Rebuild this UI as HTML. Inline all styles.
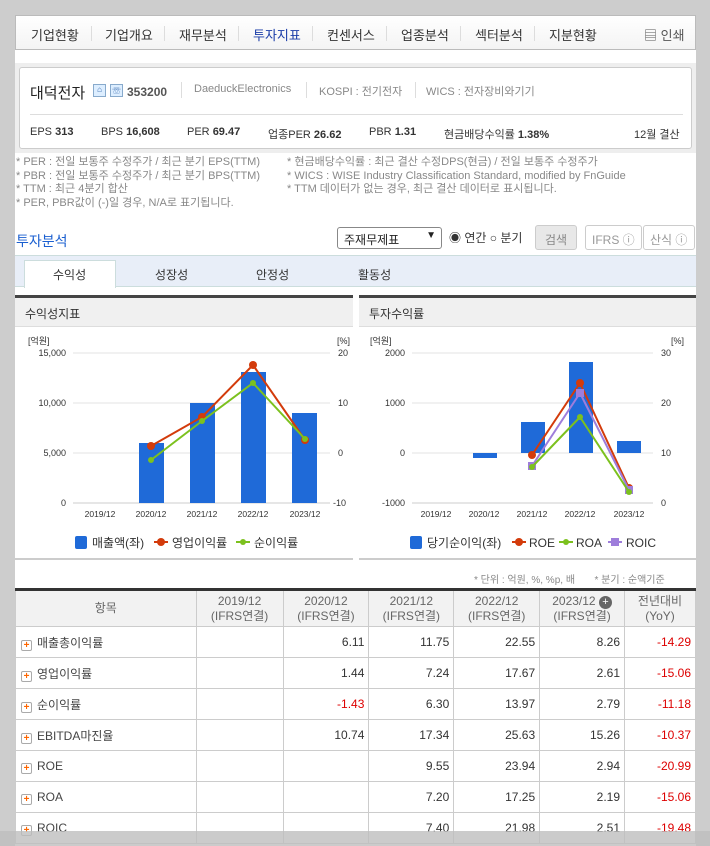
<!DOCTYPE html>
<html><head><meta charset="utf-8"><style>
*{margin:0;padding:0;box-sizing:border-box}
body{width:710px;height:846px;background:#cdcdcd;font-family:"Liberation Sans","Noto Sans CJK KR",sans-serif;font-size:12px;color:#333;position:relative;overflow:hidden}
.wrap{position:absolute;left:15px;top:15px;width:681px;height:831px;background:#fff}
.abs{position:absolute}
.nav{position:absolute;left:15px;top:15px;width:681px;height:35px;border:1px solid #bbb;background:linear-gradient(#fff,#f4f4f4)}
.nav span{position:absolute;top:9px;font-size:13px;color:#333}
.nav i{position:absolute;top:10px;width:1px;height:15px;background:#ddd}
.cbox{position:absolute;left:15px;top:63px;width:681px;height:90px;background:#eee}
.cin{position:absolute;left:4px;top:4px;width:673px;height:82px;background:#fff;border:1px solid #ccc;border-radius:3px}
.note{position:absolute;font-size:11px;color:#888;line-height:13.5px}
.tabs{position:absolute;left:15px;top:255px;width:681px;height:32px;background:#e8eef8;border-top:1px solid #cdd;border-bottom:1px solid #cdd}
.tab{position:absolute;top:10px;font-size:12px;color:#333}
.ph{position:absolute;top:295px;height:32px;background:#f0f0f0;border-top:3px solid #444;border-bottom:1px solid #ddd;font-size:12px;padding:7px 10px}
table{position:absolute;left:15px;top:588px;border-collapse:collapse;width:681px}
td,th{border:1px solid #ccc;height:31px;font-size:12px;font-weight:normal;text-align:right;padding-right:4px;color:#333}
th{background:#f2f2f2;text-align:center;padding:0;color:#666;line-height:15px;height:37px}
thead tr{border-top:3px solid #333}
td.n{text-align:left;padding-left:5px;color:#444}
td.r{color:#d00}
.pl{display:inline-block;width:11px;height:11px;border:1px solid #aaa;border-radius:2px;background:#fff;color:#f60;font-size:10px;line-height:9px;text-align:center;font-weight:bold;margin-right:5px;vertical-align:-1px}
.btn{position:absolute;top:225px;height:25px;border:1px solid #ccc;border-radius:3px;font-size:12px;color:#999;padding:5px 6px}
</style></head><body>
<div class="wrap"></div>
<div class="nav">
<span style="left:15px">기업현황</span><i style="left:75px"></i>
<span style="left:89px">기업개요</span><i style="left:148px"></i>
<span style="left:163px">재무분석</span><i style="left:222px"></i>
<span style="left:237px;color:#1a3ca8">투자지표</span><i style="left:296px"></i>
<span style="left:311px">컨센서스</span><i style="left:370px"></i>
<span style="left:385px">업종분석</span><i style="left:444px"></i>
<span style="left:459px">섹터분석</span><i style="left:518px"></i>
<span style="left:533px">지분현황</span>
<span style="left:628px;color:#555">▤ 인쇄</span>
</div>
<div class="cbox"><div class="cin">
<div class="abs" style="left:10px;top:14px;font-size:15px;color:#222">대덕전자</div>
<div class="abs" style="left:73px;top:16px;width:13px;height:13px;border:1px solid #8ac;background:#def;font-size:8px;color:#36a;text-align:center">⌂</div>
<div class="abs" style="left:90px;top:16px;width:13px;height:13px;border:1px solid #8ac;background:#def;font-size:8px;color:#36a;text-align:center">☏</div>
<div class="abs" style="left:107px;top:17px;font-size:12px;font-weight:bold;color:#555">353200</div>
<div class="abs" style="left:161px;top:14px;width:1px;height:16px;background:#ddd"></div>
<div class="abs" style="left:174px;top:15px;font-size:11px;color:#888">DaeduckElectronics</div>
<div class="abs" style="left:286px;top:14px;width:1px;height:16px;background:#ddd"></div>
<div class="abs" style="left:299px;top:15px;font-size:11px;color:#888">KOSPI : 전기전자</div>
<div class="abs" style="left:395px;top:14px;width:1px;height:16px;background:#ddd"></div>
<div class="abs" style="left:406px;top:15px;font-size:11px;color:#888">WICS : 전자장비와기기</div>
<div class="abs" style="left:10px;top:46px;width:653px;height:1px;background:#ddd"></div>
<div class="abs" style="left:10px;top:58px;font-size:11px;color:#333;white-space:nowrap">EPS <b>313</b></div>
<div class="abs" style="left:81px;top:58px;font-size:11px;white-space:nowrap">BPS <b>16,608</b></div>
<div class="abs" style="left:167px;top:58px;font-size:11px;white-space:nowrap">PER <b>69.47</b></div>
<div class="abs" style="left:248px;top:58px;font-size:11px;white-space:nowrap">업종PER <b>26.62</b></div>
<div class="abs" style="left:349px;top:58px;font-size:11px;white-space:nowrap">PBR <b>1.31</b></div>
<div class="abs" style="left:424px;top:58px;font-size:11px;white-space:nowrap">현금배당수익률 <b>1.38%</b></div>
<div class="abs" style="left:614px;top:58px;font-size:11px;white-space:nowrap">12월 결산</div>
</div></div>
<div class="note" style="left:16px;top:156px">* PER : 전일 보통주 수정주가 / 최근 분기 EPS(TTM)<br>* PBR : 전일 보통주 수정주가 / 최근 분기 BPS(TTM)<br>* TTM : 최근 4분기 합산<br>* PER, PBR값이 (-)일 경우, N/A로 표기됩니다.</div>
<div class="note" style="left:287px;top:156px">* 현금배당수익률 : 최근 결산 수정DPS(현금) / 전일 보통주 수정주가<br>* WICS : WISE Industry Classification Standard, modified by FnGuide<br>* TTM 데이터가 없는 경우, 최근 결산 데이터로 표시됩니다.</div>
<div class="abs" style="left:16px;top:231px;font-size:14px;color:#1a5fd0">투자분석</div>
<div class="abs" style="left:337px;top:227px;width:105px;height:22px;border:1px solid #888;border-radius:3px;font-size:12px;padding:3px 6px;color:#222">주재무제표<span style="position:absolute;right:5px;top:2px;font-size:10px">▼</span></div>
<div class="abs" style="left:449px;top:229px;font-size:12px;color:#333">◉ 연간 ○ 분기</div>
<div class="btn" style="left:535px;background:#e8e8e8;color:#888;padding:5px 9px">검색</div>
<div class="btn" style="left:585px">IFRS ⓘ</div>
<div class="btn" style="left:643px;width:52px">산식 ⓘ</div>
<div class="tabs">
<div class="abs" style="left:9px;top:4px;width:92px;height:28px;background:#fff;border:1px solid #cdd;border-bottom:none"></div>
<span class="tab" style="left:38px">수익성</span><span class="tab" style="left:140px">성장성</span><span class="tab" style="left:241px">안정성</span><span class="tab" style="left:343px">활동성</span>
</div>
<div class="ph" style="left:15px;width:338px">수익성지표</div>
<div class="ph" style="left:359px;width:337px">투자수익률</div>
<div class="abs" style="left:15px;top:558px;width:338px;height:2px;background:#ccc"></div>
<div class="abs" style="left:359px;top:558px;width:337px;height:2px;background:#ccc"></div>
<svg class="abs" style="left:0;top:0" width="710" height="580" font-family="Liberation Sans, Noto Sans CJK KR, sans-serif" font-size="9" fill="#333">
<g stroke="#e3e3e3"><line x1="73" x2="330" y1="353" y2="353"/><line x1="73" x2="330" y1="403" y2="403"/><line x1="73" x2="330" y1="453" y2="453"/></g>
<line x1="73" x2="330" y1="503" y2="503" stroke="#ccc"/>
<g text-anchor="end"><text x="66" y="356">15,000</text><text x="66" y="406">10,000</text><text x="66" y="456">5,000</text><text x="66" y="506">0</text></g>
<text x="28" y="344">[억원]</text><text x="337" y="344">[%]</text>
<g><text x="338" y="356">20</text><text x="338" y="406">10</text><text x="338" y="456">0</text><text x="333" y="506">-10</text></g>
<g text-anchor="middle" font-size="8.5"><text x="100" y="517">2019/12</text><text x="151" y="517">2020/12</text><text x="202" y="517">2021/12</text><text x="253" y="517">2022/12</text><text x="305" y="517">2023/12</text></g>
<g fill="#1f6ad8"><rect x="139" y="443" width="25" height="60"/><rect x="190" y="403" width="25" height="100"/><rect x="241" y="372" width="25" height="131"/><rect x="292" y="413" width="25" height="90"/></g>
<polyline points="151,446 202,417 253,365 305,440" fill="none" stroke="#d33b0b" stroke-width="2"/>
<g fill="#d33b0b"><circle cx="151" cy="446" r="4"/><circle cx="202" cy="417" r="4"/><circle cx="253" cy="365" r="4"/><circle cx="305" cy="440" r="4"/></g>
<polyline points="151,460 202,421 253,383 305,439" fill="none" stroke="#7cc11e" stroke-width="2"/>
<g fill="#7cc11e"><circle cx="151" cy="460" r="3"/><circle cx="202" cy="421" r="3"/><circle cx="253" cy="383" r="3"/><circle cx="305" cy="439" r="3"/></g>
<g font-size="12"><rect x="75" y="536" width="12" height="13" rx="2" fill="#1f6ad8"/><text x="92" y="547">매출액(좌)</text>
<line x1="154" x2="168" y1="542" y2="542" stroke="#d33b0b" stroke-width="2"/><circle cx="161" cy="542" r="4" fill="#d33b0b"/><text x="172" y="547">영업이익률</text>
<line x1="236" x2="250" y1="542" y2="542" stroke="#7cc11e" stroke-width="2"/><circle cx="243" cy="542" r="3" fill="#7cc11e"/><text x="254" y="547">순이익률</text></g>

<g stroke="#e3e3e3"><line x1="412" x2="653" y1="353" y2="353"/><line x1="412" x2="653" y1="403" y2="403"/><line x1="412" x2="653" y1="453" y2="453"/></g>
<line x1="412" x2="653" y1="503" y2="503" stroke="#ccc"/>
<g text-anchor="end"><text x="405" y="356">2000</text><text x="405" y="406">1000</text><text x="405" y="456">0</text><text x="405" y="506">-1000</text></g>
<text x="370" y="344">[억원]</text><text x="671" y="344">[%]</text>
<g><text x="661" y="356">30</text><text x="661" y="406">20</text><text x="661" y="456">10</text><text x="661" y="506">0</text></g>
<g text-anchor="middle" font-size="8.5"><text x="436" y="517">2019/12</text><text x="484" y="517">2020/12</text><text x="532" y="517">2021/12</text><text x="580" y="517">2022/12</text><text x="629" y="517">2023/12</text></g>
<g fill="#1f6ad8"><rect x="473" y="453" width="24" height="5"/><rect x="521" y="422" width="24" height="31"/><rect x="569" y="362" width="24" height="91"/><rect x="617" y="441" width="24" height="12"/></g>
<polyline points="532,455 580,383 629,488" fill="none" stroke="#d33b0b" stroke-width="2"/>
<g fill="#d33b0b"><circle cx="532" cy="455" r="4"/><circle cx="580" cy="383" r="4"/><circle cx="629" cy="488" r="4"/></g>
<polyline points="532,466 580,393 629,490" fill="none" stroke="#9e7ddb" stroke-width="2"/>
<g fill="#9e7ddb"><rect x="528" y="462" width="8" height="8"/><rect x="576" y="389" width="8" height="8"/><rect x="625" y="486" width="8" height="8"/></g>
<polyline points="532,467 580,417 629,492" fill="none" stroke="#7cc11e" stroke-width="2"/>
<g fill="#7cc11e"><circle cx="532" cy="467" r="3"/><circle cx="580" cy="417" r="3"/><circle cx="629" cy="492" r="3"/></g>
<g font-size="12"><rect x="410" y="536" width="12" height="13" rx="2" fill="#1f6ad8"/><text x="427" y="547">당기순이익(좌)</text>
<line x1="512" x2="526" y1="542" y2="542" stroke="#d33b0b" stroke-width="2"/><circle cx="519" cy="542" r="4" fill="#d33b0b"/><text x="529" y="547">ROE</text>
<line x1="559" x2="573" y1="542" y2="542" stroke="#7cc11e" stroke-width="2"/><circle cx="566" cy="542" r="3" fill="#7cc11e"/><text x="576" y="547">ROA</text>
<line x1="608" x2="622" y1="542" y2="542" stroke="#9e7ddb" stroke-width="2"/><rect x="611" y="538" width="8" height="8" fill="#9e7ddb"/><text x="626" y="547">ROIC</text></g>
</svg>
<div class="abs" style="left:474px;top:571px;font-size:10px;color:#888;white-space:nowrap">* 단위 : 억원, %, %p, 배 &nbsp;&nbsp;&nbsp;&nbsp;&nbsp; * 분기 : 순액기준</div>
<table>
<colgroup><col style="width:181px"><col style="width:87px"><col style="width:86px"><col style="width:85px"><col style="width:86px"><col style="width:85px"><col style="width:71px"></colgroup>
<thead><tr><th>항목</th><th>2019/12<br>(IFRS연결)</th><th>2020/12<br>(IFRS연결)</th><th>2021/12<br>(IFRS연결)</th><th>2022/12<br>(IFRS연결)</th><th>2023/12 <span style="display:inline-block;width:13px;height:13px;border-radius:50%;background:#666;color:#fff;font-size:11px;line-height:13px">+</span><br>(IFRS연결)</th><th>전년대비<br>(YoY)</th></tr></thead>
<tbody>
<tr><td class="n"><span class="pl">+</span>매출총이익률</td><td></td><td>6.11</td><td>11.75</td><td>22.55</td><td>8.26</td><td class="r">-14.29</td></tr>
<tr><td class="n"><span class="pl">+</span>영업이익률</td><td></td><td>1.44</td><td>7.24</td><td>17.67</td><td>2.61</td><td class="r">-15.06</td></tr>
<tr><td class="n"><span class="pl">+</span>순이익률</td><td></td><td class="r">-1.43</td><td>6.30</td><td>13.97</td><td>2.79</td><td class="r">-11.18</td></tr>
<tr><td class="n"><span class="pl">+</span>EBITDA마진율</td><td></td><td>10.74</td><td>17.34</td><td>25.63</td><td>15.26</td><td class="r">-10.37</td></tr>
<tr><td class="n"><span class="pl">+</span>ROE</td><td></td><td></td><td>9.55</td><td>23.94</td><td>2.94</td><td class="r">-20.99</td></tr>
<tr><td class="n"><span class="pl">+</span>ROA</td><td></td><td></td><td>7.20</td><td>17.25</td><td>2.19</td><td class="r">-15.06</td></tr>
<tr><td class="n"><span class="pl">+</span>ROIC</td><td></td><td></td><td>7.40</td><td>21.98</td><td>2.51</td><td class="r">-19.48</td></tr>
</tbody></table>
<div class="abs" style="left:0;top:831px;width:710px;height:15px;background:rgba(190,190,190,0.8)"></div>
</body></html>
